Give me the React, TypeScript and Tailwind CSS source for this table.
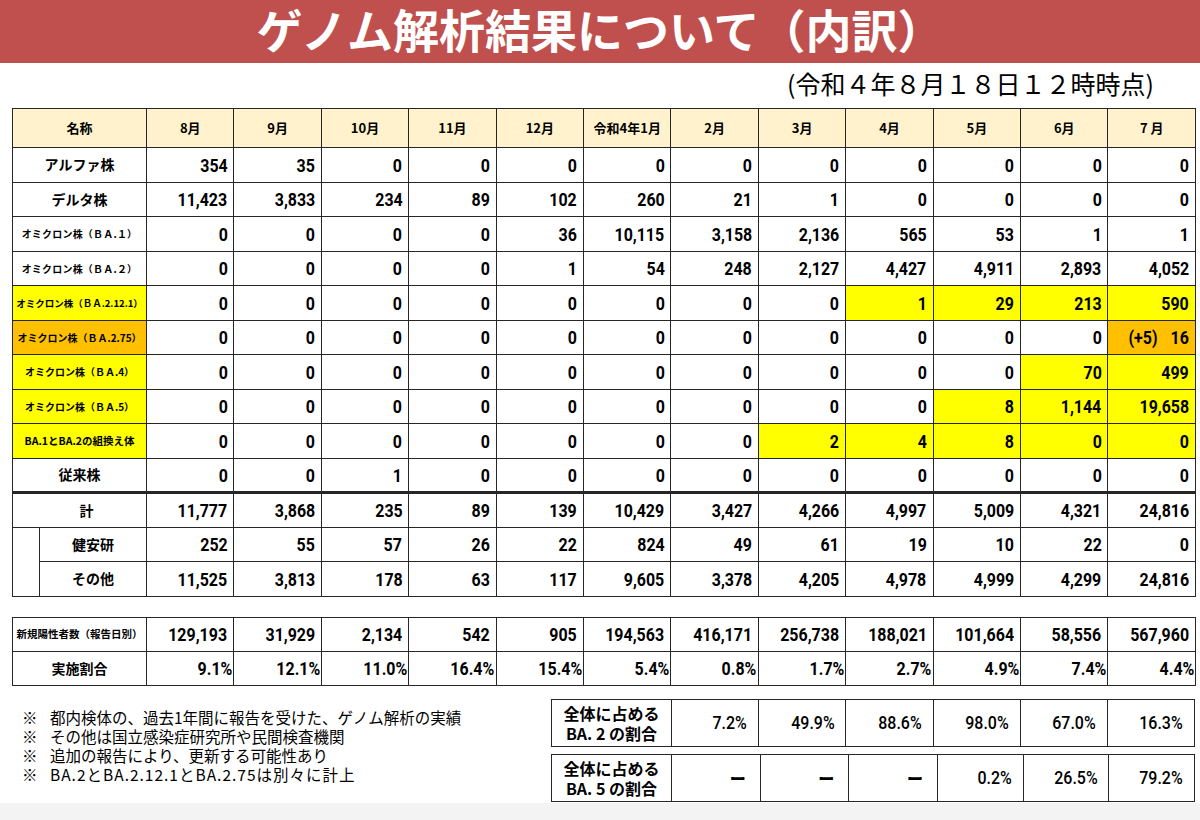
import React from 'react';

const Y = 'bg-[#ffff00]';
const O = 'bg-[#ffc000]';

type Row = {
  label: string;
  labelCls: string;
  vals: string[];
  hl?: Record<number, string>;
};

const z = (n: number) => Array.from({ length: n }, () => '0');

const rows: Row[] = [
  { label: 'アルファ株', labelCls: 'text-[14px]', vals: ['354', '35', ...z(10)] },
  { label: 'デルタ株', labelCls: 'text-[14px]', vals: ['11,423', '3,833', '234', '89', '102', '260', '21', '1', '0', '0', '0', '0'] },
  { label: 'オミクロン株（ＢＡ.１）', labelCls: 'text-[10px] tracking-[0.2px]', vals: ['0', '0', '0', '0', '36', '10,115', '3,158', '2,136', '565', '53', '1', '1'] },
  { label: 'オミクロン株（ＢＡ.２）', labelCls: 'text-[10px] tracking-[0.2px]', vals: ['0', '0', '0', '0', '1', '54', '248', '2,127', '4,427', '4,911', '2,893', '4,052'] },
  { label: 'オミクロン株（ＢＡ.2.12.1）', labelCls: 'text-[9.5px] ' + Y, vals: [...z(8), '1', '29', '213', '590'], hl: { 8: Y, 9: Y, 10: Y, 11: Y } },
  { label: 'オミクロン株（ＢＡ.2.75）', labelCls: 'text-[10px] ' + O, vals: [...z(11), 'plus'], hl: { 11: O } },
  { label: 'オミクロン株（ＢＡ.4）', labelCls: 'text-[10px] ' + Y, vals: [...z(10), '70', '499'], hl: { 10: Y, 11: Y } },
  { label: 'オミクロン株（ＢＡ.5）', labelCls: 'text-[10px] ' + Y, vals: [...z(9), '8', '1,144', '19,658'], hl: { 9: Y, 10: Y, 11: Y } },
  { label: 'BA.1とBA.2の組換え体', labelCls: 'text-[10.5px] ' + Y, vals: [...z(7), '2', '4', '8', '0', '0'], hl: { 7: Y, 8: Y, 9: Y, 10: Y, 11: Y } },
  { label: '従来株', labelCls: 'text-[14px]', vals: ['0', '0', '1', ...z(9)] },
];

const total = ['11,777', '3,868', '235', '89', '139', '10,429', '3,427', '4,266', '4,997', '5,009', '4,321', '24,816'];
const kenan = ['252', '55', '57', '26', '22', '824', '49', '61', '19', '10', '22', '0'];
const other = ['11,525', '3,813', '178', '63', '117', '9,605', '3,378', '4,205', '4,978', '4,999', '4,299', '24,816'];
const positives = ['129,193', '31,929', '2,134', '542', '905', '194,563', '416,171', '256,738', '188,021', '101,664', '58,556', '567,960'];
const ratio = ['9.1%', '12.1%', '11.0%', '16.4%', '15.4%', '5.4%', '0.8%', '1.7%', '2.7%', '4.9%', '7.4%', '4.4%'];
const months = ['8月', '9月', '10月', '11月', '12月', '令和4年1月', '2月', '3月', '4月', '5月', '6月', '7 月'];

const JP = "font-['Noto_Sans_CJK_JP',sans-serif]";
const NUMF = "font-[Roboto,'Noto_Sans_CJK_JP',sans-serif]";

function Num({ v, cls = '' }: { v: string; cls?: string }) {
  return (
    <span className={`inline-block origin-right scale-x-[0.84] ${NUMF} text-[19px] font-bold leading-none text-black ${cls}`}>
      {v}
    </span>
  );
}

const cellB = 'border border-[#262626]';

function Cols() {
  return (
    <colgroup>
      <col className="w-[27px]" />
      <col className="w-[107px]" />
      {months.map((m) => (
        <col key={m} className="w-[87.42px]" />
      ))}
    </colgroup>
  );
}

function ValueCell({ v, bg = '', pr = 'pr-[6px]' }: { v: string; bg?: string; pr?: string }) {
  if (v === 'plus') {
    return (
      <td className={`${cellB} ${bg} p-0`}>
        <div className="flex items-center justify-end gap-[10px] pr-[6px]">
          <Num v="(+5)" />
          <Num v="16" />
        </div>
      </td>
    );
  }
  return (
    <td className={`${cellB} ${bg} p-0 text-right ${pr}`}>
      <Num v={v} />
    </td>
  );
}

function BoxRow({ top, bottom, vals }: { top: string; bottom: string; vals: string[] }) {
  return (
    <div className="flex h-[48px] w-[644px] border border-[#262626]">
      <div className={`flex w-[120px] shrink-0 flex-col items-center justify-center border-r border-[#262626] ${JP} text-[16px] font-bold leading-[20px] text-black`}>
        <span>{top}</span>
        <span>{bottom}</span>
      </div>
      {vals.map((v, i) => (
        <div
          key={i}
          className={`flex flex-1 items-center justify-end ${i > 0 ? 'border-l border-[#262626]' : ''} ${v === 'ー' ? 'pr-[14px]' : 'pr-[11px]'}`}
        >
          {v === 'ー' ? (
            <span className={`${JP} text-[16px] font-black text-black`}>ー</span>
          ) : (
            <span className={`inline-block origin-right scale-x-[0.84] ${NUMF} text-[19px] font-medium leading-none text-black`}>{v}</span>
          )}
        </div>
      ))}
    </div>
  );
}

export default function App() {
  return (
    <div className={`flex h-[820px] w-[1200px] flex-col bg-white ${JP}`}>
      {/* title bar */}
      <div className="flex h-[63px] shrink-0 items-center justify-center bg-[#c0504d] pb-[6px]">
        <span className={`${JP} text-[46px] font-bold leading-[57px] text-white`}>ゲノム解析結果について（内訳）</span>
      </div>

      {/* subtitle */}
      <div className="flex h-[45px] shrink-0 items-start justify-end pr-[46px] pt-[5px]">
        <span className={`${JP} text-[25px] leading-[30px] text-black`}>(令和４年８月１８日１２時時点)</span>
      </div>

      {/* main table */}
      <div className="pl-[12px]">
        <table className="w-[1183px] table-fixed border-collapse">
          <Cols />
          <thead>
            <tr className="h-[39px] bg-[#fff2cc]">
              <th colSpan={2} className={`${cellB} p-0 text-center text-[13px] font-bold text-black`}>名称</th>
              {months.map((m) => (
                <th key={m} className={`${cellB} p-0 text-center text-[13px] font-bold whitespace-pre text-black`}>{m}</th>
              ))}
            </tr>
          </thead>
          <tbody>
            {rows.map((r) => (
              <tr key={r.label} className="h-[34.5px]">
                <td colSpan={2} className={`${cellB} p-0 text-center font-bold whitespace-nowrap text-black ${r.labelCls}`}>{r.label}</td>
                {r.vals.map((v, i) => (
                  <ValueCell key={i} v={v} bg={r.hl?.[i] ?? ''} />
                ))}
              </tr>
            ))}
            <tr className="h-[34.5px] border-t-[3px] border-[#262626]">
              <td colSpan={2} className={`${cellB} border-t-[3px] p-0 pl-[14px] text-center text-[14px] font-bold text-black`}>計</td>
              {total.map((v, i) => (
                <td key={i} className={`${cellB} border-t-[3px] p-0 pr-[6px] text-right`}>
                  <Num v={v} />
                </td>
              ))}
            </tr>
            <tr className="h-[34.5px]">
              <td rowSpan={2} className="border-b border-l border-[#262626] p-0"></td>
              <td className={`${cellB} p-0 text-center text-[14px] font-bold text-black`}>健安研</td>
              {kenan.map((v, i) => (
                <ValueCell key={i} v={v} />
              ))}
            </tr>
            <tr className="h-[34.5px]">
              <td className={`${cellB} p-0 text-center text-[14px] font-bold text-black`}>その他</td>
              {other.map((v, i) => (
                <ValueCell key={i} v={v} />
              ))}
            </tr>
          </tbody>
        </table>
      </div>

      {/* positives table */}
      <div className="mt-[20px] pl-[12px]">
        <table className="w-[1183px] table-fixed border-collapse">
          <Cols />
          <tbody>
            <tr className="h-[34px]">
              <td colSpan={2} className={`${cellB} p-0 text-center text-[10.5px] font-bold whitespace-nowrap text-black`}>新規陽性者数（報告日別）</td>
              {positives.map((v, i) => (
                <ValueCell key={i} v={v} />
              ))}
            </tr>
            <tr className="h-[34px]">
              <td colSpan={2} className={`${cellB} p-0 text-center text-[14px] font-bold text-black`}>実施割合</td>
              {ratio.map((v, i) => (
                <ValueCell key={i} v={v} pr="pr-[1px]" />
              ))}
            </tr>
          </tbody>
        </table>
      </div>

      {/* bottom area */}
      <div className="mt-[13px] flex">
        <div className={`w-[551px] shrink-0 pl-[22px] pt-[9px] ${JP} text-[15.5px] leading-[19px] text-black`}>
          <div className="flex"><span className="w-[28px] shrink-0">※</span><span>都内検体の、過去1年間に報告を受けた、ゲノム解析の実績</span></div>
          <div className="flex"><span className="w-[28px] shrink-0">※</span><span>その他は国立感染症研究所や民間検査機関</span></div>
          <div className="flex"><span className="w-[28px] shrink-0">※</span><span>追加の報告により、更新する可能性あり</span></div>
          <div className="flex"><span className="w-[28px] shrink-0">※</span><span className="tracking-[1px]">BA.2とBA.2.12.1とBA.2.75は別々に計上</span></div>
        </div>
        <div className="flex flex-col gap-[7px]">
          <BoxRow top="全体に占める" bottom="BA. 2 の割合" vals={['7.2%', '49.9%', '88.6%', '98.0%', '67.0%', '16.3%']} />
          <BoxRow top="全体に占める" bottom="BA. 5 の割合" vals={['ー', 'ー', 'ー', '0.2%', '26.5%', '79.2%']} />
        </div>
      </div>

      <div className="mt-auto h-[17px] shrink-0 bg-[#f3f3f3]" />
    </div>
  );
}
